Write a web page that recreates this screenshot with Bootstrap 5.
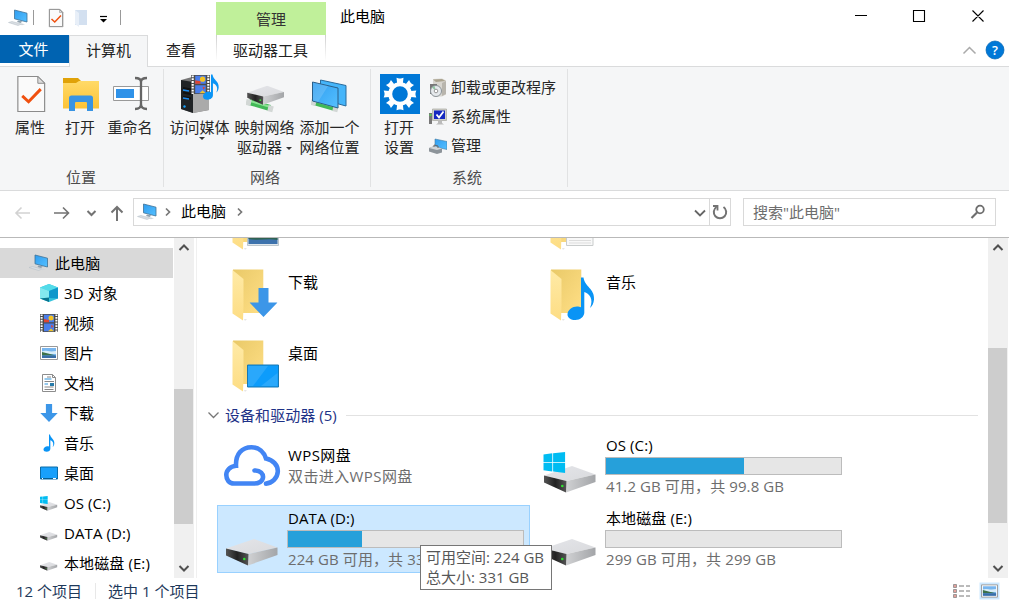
<!DOCTYPE html>
<html lang="zh-CN">
<head>
<meta charset="utf-8">
<title>此电脑</title>
<link href="https://cdn.jsdelivr.net/npm/bootstrap@5.3.0/dist/css/bootstrap.min.css" rel="stylesheet">
<style>
body{font-family:"Open Sans","Noto Sans CJK SC",sans-serif;font-size:15px;line-height:20px;color:#000;background:#fff;height:604px;width:1009px;overflow:hidden}
svg{display:block;flex:none}
.titlebar{height:35px}
.quick{width:216px;padding-left:8px}
.ctx-tab{width:110px;height:33px;margin-top:2px;background:#c0f09a;color:#333}
.win-title{padding:6px 0 0 14px}
.tabrow{height:32px;border-bottom:1px solid #dadbdc;color:#222}
.tabrow>div{height:30px;padding-bottom:1px}
.file-tab{width:69px;height:28px!important;background:#0063b1;color:#fff;padding-right:2px}
.active-tab{width:79px;height:32px!important;background:#f5f6f7;border:1px solid #dadbdc;border-bottom:0;padding-bottom:3px!important}
.view-tab{width:68px;padding-right:2px}
.tool-tab{width:110px;border-style:solid;border-width:0 1px;border-image:linear-gradient(#ccc,#fff 85%) 1;padding-right:1px}
.ribbon{height:123px;background:#f5f6f7;color:#262626}
.rgroup{border-right:1px solid #e1e2e3;margin:2px 0 3px;height:118px}
.g1{width:164px}.g2{width:207px}.g3{width:197px}
.rbody{height:98px;padding-top:5px}
.cap{line-height:20px;color:#4c4c4c;padding-right:4px}
.g1 .cap{padding-right:1px}
.rbtn{width:50px;line-height:19.5px;text-align:center;white-space:nowrap}
.rbtn.wide{width:65px}
.rbtn svg{margin:0 auto 4px}
.caret{display:inline-block;border:3.5px solid transparent;border-top-color:#333;border-bottom:0;vertical-align:middle}
.srow{height:29px;gap:4px}
.addr{height:48px;border-top:1px solid #dadbdc;border-bottom:1px solid #b9b9b9}
.arrows{width:133px;height:28px}
.abox{width:598px;height:28px;border:1px solid #d9d9d9}
.sbox{width:253px;height:28px;border:1px solid #d9d9d9;margin-left:12px;padding:0 9px;color:#6d6d6d}
.refresh{width:21px;height:26px;border-left:1px solid #d9d9d9}
.body-area{height:340px}
.side{width:173px;padding-top:10px;overflow:hidden}
.side .item{height:30px;padding-left:40px;gap:6px;white-space:nowrap;letter-spacing:.1px}
.side .item svg{width:18px;height:18px}
.side .item.sel{background:#d9d9d9;padding-left:28px}
.side .item.sel svg{width:21px}
.sbar{width:20px;background:#f0f0f0;margin-left:1px}
.thumb{background:#cdcdcd;margin-right:1px}
.pane{width:791px;padding-left:20px;overflow:hidden}
.pane-edge{border-left:1px solid #f0f0f0;margin-left:2px}
.files{display:grid;grid-template-columns:318px 318px;grid-auto-rows:71px;margin-top:-46px}
.entry{padding-left:6px;gap:5px}
.entry .nm{padding-top:9px}
.ghead{height:22px;color:#1e3287;margin-left:-10px;white-space:nowrap;margin-top:-1px;letter-spacing:.05px}
.rule{height:1px;background:#e2e2e2;flex:1;margin:1px 10px 0 9px}
.drives{display:grid;grid-template-columns:313px 313px;column-gap:5px;row-gap:5px;grid-auto-rows:68px;padding-top:6px}
.drive{border:1px solid transparent;padding-left:5px;gap:4px;white-space:nowrap;letter-spacing:.1px}
.drive.sel{background:#cce8ff;border-color:#99d1ff}
.drive .txt{padding-top:2px;width:237px;text-indent:1px}
.meter{height:18px;border:1px solid #bcbcbc;background:#e6e6e6;margin:2px 0 1px}
.meter>div{height:100%;background:#26a0da}
.sub{color:#6d6d6d}
.statusbar{height:25px;color:#1e395b;padding:1px 8px 0 16px}
.sep{width:1px;height:16px;background:#e8e8e8}
.tip{position:absolute;left:420px;top:545px;width:132px;height:45px;border:1px solid #767676;background:#fff;color:#575757;padding:1px 0 0 5px;white-space:nowrap}
</style>
</head>
<body class="d-flex flex-column">
<svg width="0" height="0" class="position-absolute">
<defs>
<linearGradient id="scr" x1="0" y1="0" x2="1" y2="1"><stop offset="0" stop-color="#2f9df0"/><stop offset="1" stop-color="#55c0ff"/></linearGradient>
<linearGradient id="fb" x1="0" y1="0" x2="1" y2="1"><stop offset="0" stop-color="#e9c968"/><stop offset="1" stop-color="#ffdf86"/></linearGradient>
<linearGradient id="ff" x1="0" y1="0" x2="0" y2="1"><stop offset="0" stop-color="#ffeaa6"/><stop offset="1" stop-color="#fddd84"/></linearGradient>
<linearGradient id="dt" x1="0" y1="0" x2="1" y2="1"><stop offset="0" stop-color="#e4e5e9"/><stop offset="1" stop-color="#d9dadd"/></linearGradient>
<linearGradient id="ds" x1="0" y1="0" x2="1" y2="0"><stop offset="0" stop-color="#d0d1d3"/><stop offset="1" stop-color="#a3a5a8"/></linearGradient>
<linearGradient id="dk" x1="0" y1="0" x2="1" y2="0"><stop offset="0" stop-color="#555"/><stop offset=".5" stop-color="#222"/><stop offset="1" stop-color="#555"/></linearGradient>
<linearGradient id="fo" x1="0" y1="0" x2="0" y2="1"><stop offset="0" stop-color="#ffda68"/><stop offset="1" stop-color="#fdc336"/></linearGradient>
<symbol id="pc" viewBox="0 0 20 18"><path d="M6.500 1 19 4.200V13L6.500 9.800z" fill="url(#scr)" stroke="#3f7195" stroke-width=".8"/><path d="M10 11.500l4.500 1-2 1.500-3.500-1z" fill="#8fa0ad"/><path d="M.5 13.500 4 12.500l9.500 2.500-3.500 1.500z" fill="#d9dee3" stroke="#b3bcc4" stroke-width=".5"/><path d="M11 15l3-.5 3 .8-3 1z" fill="#cfd5da"/></symbol>
<symbol id="check" viewBox="0 0 30 38"><path d="M1.500 1H22l7 7v29H1.500z" fill="#fafafa" stroke="#8b8b8b" stroke-width="1.200"/><path d="M22 1v7h7z" fill="#ddd" stroke="#8b8b8b"/><path d="M6 21l6.500 6L25 14" fill="none" stroke="#f0500f" stroke-width="3"/></symbol>
<symbol id="bigfolder" viewBox="0 0 60 71"><path d="M10 6.500h30.300V50H10z" fill="url(#fb)"/><path d="M9.500 7 20.500 16v27l-.5 14.500L9.500 50.500z" fill="url(#ff)"/><path d="M21 56h3l-2 2z" fill="#e5e5e5"/></symbol>
<symbol id="disk" viewBox="0 0 54 28"><path d="M0 10 28 .5 51.500 9 22.500 15.500z" fill="url(#dt)"/><path d="M22.500 15.500 51.500 9v7.500L22 27z" fill="url(#ds)"/><path d="M0 10 22.500 15.500 22 27 0 17z" fill="url(#dk)"/><circle cx="18.300" cy="20.500" r="1.300" fill="#2fe02f"/></symbol>
<symbol id="win" viewBox="0 0 22 21"><path d="M0 2.500 9 1.300V10H0zM9.800 1.200 22 0v10H9.800zM0 10.800h9v8.700L0 18.200zM9.800 10.800H22V21l-12.200-1.400z" fill="#00bcf2"/></symbol>
<symbol id="note" viewBox="0 0 28 44"><path d="M14 1h2.500c1 9 11.500 11.500 10.500 22-.3 4-2 7-4 8.500C27 22 22 17 17.300 15.500V36c0 4-4 7.500-9 7.500C4 43.500.5 41.500.5 38c0-4.500 5-8 9.500-8 1.500 0 3 .2 4 .8z" fill="#0a94f5"/></symbol>
<symbol id="down" viewBox="0 0 28 29"><path d="M9 0h10v14.500h9L14 29 0 14.500h9z" fill="#3c96e8"/></symbol>
<symbol id="film" viewBox="0 0 18 18"><path d="M0 0h18v18H0z" fill="#4b4b4b"/><path d="M1.600 .4v18M16.400 .4v18" stroke="#fff" stroke-width="2" stroke-dasharray="1.700 1"/><path d="M4 .7h10v7.600H4zM4 9.600h10v7.700H4z" fill="#4b7eea"/><circle cx="11" cy="4" r="2.500" fill="#f4c221"/><path d="M4 5l5 1v2.300H4zM11 11l2.500 1-2 2z" fill="#df4530"/><path d="M8 17.300l3-2.800 3 2.800z" fill="#f0c32b"/></symbol>
<symbol id="pic" viewBox="0 0 18 18"><path d="M.5 2.500h17v13H.5z" fill="#fff" stroke="#999"/><path d="M2 4h14v10H2z" fill="#78b6ef"/><path d="M2 7.500c4-2 6 1 14-.5v3H2z" fill="#d7ecf8"/><path d="M2 8l6 1.500 8 2H2z" fill="#3c7149"/><path d="M2 11.500h14V14H2z" fill="#396ea8"/></symbol>
<symbol id="net" viewBox="0 0 28 14"><path d="M3 3 24 9" stroke="#42b957" stroke-width="6"/><path d="M4 2 23 7.500" stroke="#8be292" stroke-width="2"/><path d="M0 3 5 4.200M22 9l5 1.300" stroke="#d2d7d5" stroke-width="6"/></symbol>
<symbol id="chev" viewBox="0 0 12 12"><path d="M1.500 8 6 3.500 10.500 8" fill="none" stroke="#505050" stroke-width="2"/></symbol>
</defs>
</svg>

<header class="titlebar d-flex">
  <div class="quick d-flex align-items-center">
    <svg width="20" height="18"><use href="#pc"/></svg>
    <svg width="160" height="24" viewBox="28 5 160 24"><path d="M33.500 9v15M120.500 9v15" stroke="#999"/><use href="#check" x="48" y="7.500" width="16" height="19"/><path d="M49.500 8.500h10l3 3v14h-13z" fill="none" stroke="#999"/><path d="M75 9h12v15H75z" fill="#d3e0f0"/><path d="M75 9l4 3v14l-4-3z" fill="#e8eff8"/><path d="M100 15.500h7" stroke="#000" stroke-width="1.200"/><path d="M100 18h7l-3.500 3.500z"/></svg>
  </div>
  <div class="ctx-tab d-flex align-items-center justify-content-center">管理</div>
  <div class="win-title">此电脑</div>
  <svg class="ms-auto" width="160" height="35" viewBox="849 0 160 35"><path d="M855 15.500h12M913.500 10.500h11v11h-11zM972.500 10.500l11 11M983.500 10.500l-11 11" fill="none" stroke="#000" stroke-width="1.100"/></svg>
</header>
<nav class="tabrow d-flex">
  <div class="file-tab d-flex align-items-center justify-content-center">文件</div>
  <div class="active-tab d-flex align-items-center justify-content-center">计算机</div>
  <div class="view-tab d-flex align-items-center justify-content-center">查看</div>
  <div class="tool-tab d-flex align-items-center justify-content-center">驱动器工具</div>
  <div class="ms-auto d-flex align-items-center me-1 gap-2">
    <svg width="16" height="12" viewBox="0 0 16 12"><path d="M2.500 9.500 8.500 3.500l6 6" fill="none" stroke="#aaa" stroke-width="1.500"/></svg>
    <svg width="20" height="20" viewBox="0 0 20 20"><circle cx="10" cy="10" r="9" fill="#0078d7" stroke="#0063b1" stroke-width=".7"/><text x="10" y="14.500" text-anchor="middle" font-size="13" font-weight="600" fill="#fff">?</text></svg>
  </div>
</nav>

<section class="ribbon d-flex">
  <div class="rgroup g1">
    <div class="rbody d-flex" style="padding-left:5px">
      <div class="rbtn"><svg width="40" height="40" viewBox="0 0 40 40"><use href="#check" x="6" y="1.500" width="30" height="37"/></svg>属性</div>
      <div class="rbtn"><svg width="40" height="40" viewBox="0 0 40 40"><path d="M3 4h15l3 3-3 4H3z" fill="#e0a208"/><path d="M3 9h13l3-2h20v27.500H3z" fill="url(#fo)"/><path d="M9 37V24q0-2.500 2.500-2.500h19q2.500 0 2.500 2.500v13h-6v-8q0-1-1-1H16q-1 0-1 1v8z" fill="#3994e3"/></svg>打开</div>
      <div class="rbtn"><svg width="40" height="40" viewBox="0 0 40 40"><path d="M3.500 12.500h35v14h-35z" fill="#fff" stroke="#999"/><path d="M6 15h18v9H6z" fill="#2f92e8"/><path d="M25 4c4 0 6 1 6 4v22c0 3-2 5-6 5M37 4c-4 0-6 1-6 4v22c0 3 2 5 6 5" fill="none" stroke="#666" stroke-width="2.300"/></svg>重命名</div>
    </div>
    <div class="cap text-center">位置</div>
  </div>
  <div class="rgroup g2">
    <div class="rbody d-flex" style="padding-left:3px">
      <div class="rbtn wide position-relative"><svg width="40" height="40" viewBox="0 0 40 40"><path d="M1 6 12 3l17 3v30l-16 3L1 35z" fill="#777"/><path d="M1 6l12 2v31L1 35z" fill="#202326"/><path d="M13 8l16-2v30l-16 3z" fill="#aaa"/><path d="M3 14l8 1.500M3 18.500l8 1.500M3 23l8 1.500" stroke="#111" stroke-width="2"/><path d="M3 16l6 1M3 24l6 1" stroke="#1c8cf0" stroke-width="1.300"/><circle cx="4.500" cy="32.500" r="1.200" fill="#16a2ff"/><use href="#film" x="11" y="1" width="19" height="19"/><use href="#note" x="22" y="0" width="18" height="26"/></svg>访问媒体<span class="caret position-absolute" style="left:32px;top:63px"></span></div>
      <div class="rbtn wide"><svg width="40" height="40" viewBox="0 0 40 40"><use href="#net" x="1" y="25" width="28" height="14"/><use href="#disk" x="2" y="11.500" width="39" height="20"/></svg>映射网络<br>驱动器 <span class="caret"></span></div>
      <div class="rbtn wide"><svg width="40" height="40" viewBox="0 0 40 40"><use href="#net" x="1" y="25" width="28" height="14"/><path d="M10.500 6 36 11.500V32L10.500 25z" fill="#45b5fa" stroke="#2a6b9c"/><path d="M2.500 8 28 14v20L2.500 27z" fill="url(#scr)" stroke="#2a5f89"/><path d="M3 8.500 18 12 8 28 3 26.500z" fill="#fff" opacity=".15"/></svg>添加一个<br>网络位置</div>
    </div>
    <div class="cap text-center">网络</div>
  </div>
  <div class="rgroup g3">
    <div class="rbody d-flex">
      <div class="rbtn" style="width:50px;margin-left:3px"><svg width="40" height="40" viewBox="-20 -20 40 40" style="margin-left:6px"><path d="M-20-20h40v40h-40z" fill="#0078d7"/><circle r="9.800" fill="none" stroke="#fff" stroke-width="4"/><g fill="#fff"><path id="cog" d="M-2.900-11-3.500-16.300-1-15.500H1L3.500-16.300 2.900-11z"/><use href="#cog" transform="rotate(45)"/><use href="#cog" transform="rotate(90)"/><use href="#cog" transform="rotate(135)"/><use href="#cog" transform="rotate(180)"/><use href="#cog" transform="rotate(225)"/><use href="#cog" transform="rotate(270)"/><use href="#cog" transform="rotate(315)"/></g></svg>打开<br>设置</div>
      <div class="lh-sm" style="padding-left:5px;margin-top:-1px">
        <div class="srow d-flex align-items-center"><svg width="18" height="20" viewBox="0 0 18 20"><path d="M4 1l9-.5 4 2v14l-4 2H4z" fill="#d7d5cf"/><path d="M4 1.500 13 1l3.500 2L7 4z" fill="#aaa38f"/><path d="M13 5l4-2v13l-4 2z" fill="#b8b5ad"/><path d="M1 6h7v10H1z" fill="#777"/><circle cx="7" cy="13" r="5.500" fill="#e5e9ec" stroke="#8b9297"/><path d="M7 13 3 9.500 5.500 8z" fill="#8dc6a0"/><circle cx="7" cy="13" r="1.800" fill="#fff" stroke="#999"/></svg>卸载或更改程序</div>
        <div class="srow d-flex align-items-center"><svg width="18" height="20" viewBox="0 0 18 20"><path d="M0 6h3v11H0z" fill="#777"/><path d="M.5 8h2" stroke="#4be34b" stroke-width="1.500"/><path d="M3.500 2h14v11.500h-14z" fill="#d0d0ca" stroke="#a6a69f" stroke-width=".7"/><path d="M5 3.500h11V12H5z" fill="#1528c0"/><path d="M7.500 7.500l2.500 3 4.500-6" fill="none" stroke="#fff" stroke-width="1.800"/><path d="M9 13.500h4V16l2 1.500H7L9 16z" fill="#bbb"/></svg>系统属性</div>
        <div class="srow d-flex align-items-center"><svg width="18" height="20" viewBox="0 0 18 20"><path d="M6 3l12 2.500v8L6 11z" fill="url(#scr)" stroke="#447da3" stroke-width=".6"/><path d="M0 12l5-2 8 2.500v4L8 18 0 15.500z" fill="#8d949a"/><path d="M0 12l5-2 8 2.500L8 14z" fill="#d1d5d8"/><path d="M5 11V9l4 1v2" fill="none" stroke="#666"/></svg>管理</div>
      </div>
    </div>
    <div class="cap text-center">系统</div>
  </div>
</section>

<section class="addr d-flex align-items-start" style="padding-top:7px">
  <svg class="arrows" viewBox="0 198 133 28"><g fill="none" stroke-width="1.600"><path d="M30 213H15.500M21.500 207.500 16 213l5.500 5.500" stroke="#d2d2d2"/><path d="M54 213H69M63 207.500l5.500 5.500-5.500 5.500" stroke="#737373"/><path d="M87.500 211l4 4 4-4" stroke="#737373" stroke-width="2"/><path d="M117 221V206.500M111.500 212.500l5.500-5.500 5.500 5.500" stroke="#737373" stroke-width="2"/></g></svg>
  <div class="abox d-flex align-items-center">
    <svg width="47" height="26" viewBox="134 199 47 26"><use href="#pc" x="137" y="203" width="20" height="18"/><path d="M166 208.500l3.500 3.500-3.500 3.500" fill="none" stroke="#777" stroke-width="1.700"/></svg><span class="pb-1" style="margin-top:2px">此电脑</span>
    <svg width="24" height="26" viewBox="226 199 24 26"><path d="M238 208.500l3.500 3.500-3.500 3.500" fill="none" stroke="#777" stroke-width="1.700"/></svg>
    <svg class="ms-auto" width="12" height="12" viewBox="0 0 12 12" style="margin-right:3px"><path d="M1 4.500 6 9.500l5-5" fill="none" stroke="#666" stroke-width="1.800"/></svg>
    <div class="refresh d-flex align-items-center justify-content-center"><svg width="18" height="18" viewBox="0 0 18 18"><path d="M12.500 4A6.200 6.200 0 1 1 5.500 4" fill="none" stroke="#737373" stroke-width="2"/><path d="M2 3h4.500v4.500" fill="none" stroke="#737373" stroke-width="1.800"/></svg></div>
  </div>
  <div class="sbox d-flex align-items-center">搜索"此电脑"<svg class="ms-auto" width="16" height="16" viewBox="0 0 16 16"><circle cx="10" cy="5.500" r="3.800" fill="none" stroke="#6d6d6d" stroke-width="1.800"/><path d="M7 8.500l-5.500 5.500" stroke="#6d6d6d" stroke-width="2.200"/></svg></div>
</section>

<main class="body-area d-flex">
  <div class="side">
    <div class="item sel d-flex align-items-center"><svg><use href="#pc"/></svg>此电脑</div>
    <div class="item d-flex align-items-center"><svg viewBox="0 0 18 18"><path d="M9 0l9 3.500v11L9 18 0 14.500v-11z" fill="#35c3dc"/><path d="M9 0l9 3.500L9 7 0 3.500z" fill="#53dbe9"/><path d="M0 3.500 9 7v7l-9 .5z" fill="#83e8ef"/><path d="M18 3.500 9 7v7l9 .5z" fill="#0f98cb"/><path d="M0 14.500l9-1V18z" fill="#08748f"/></svg>3D 对象</div>
    <div class="item d-flex align-items-center"><svg><use href="#film"/></svg>视频</div>
    <div class="item d-flex align-items-center"><svg><use href="#pic"/></svg>图片</div>
    <div class="item d-flex align-items-center"><svg viewBox="0 0 18 18"><path d="M2.500.5h10l3 3v14h-13z" fill="#fff" stroke="#8d8d8d"/><path d="M12.500.5v3h3" fill="none" stroke="#888"/><path d="M7 3h4M4.500 7.500H14M4.500 13h9M4.500 15.500h9" stroke="#888"/><path d="M4.500 5h7M4.500 10h3.500" stroke="#2c93db" stroke-width="1.200"/><path d="M10 9h4v3h-4z" fill="#287cab"/></svg>文档</div>
    <div class="item d-flex align-items-center"><svg><use href="#down"/></svg>下载</div>
    <div class="item d-flex align-items-center"><svg><use href="#note"/></svg>音乐</div>
    <div class="item d-flex align-items-center"><svg viewBox="0 0 18 18"><path d="M.5 3h17v12H.5z" fill="#18a0fb" stroke="#0a6ca8"/><path d="M1 14.500h16" stroke="#075e91"/><path d="M2 14.500h1M13 14.500h3" stroke="#fff"/></svg>桌面</div>
    <div class="item d-flex align-items-center"><svg viewBox="0 0 18 18"><use href="#disk" y="7.500" width="18" height="10"/><use href="#win" x="-1" y="2" width="9" height="8"/></svg>OS (C:)</div>
    <div class="item d-flex align-items-center"><svg viewBox="0 0 18 18"><use href="#disk" y="7.500" width="18" height="10"/></svg>DATA (D:)</div>
    <div class="item d-flex align-items-center"><svg viewBox="0 0 18 18"><use href="#disk" y="7.500" width="18" height="10"/></svg>本地磁盘 (E:)</div>
  </div>
  <div class="sbar d-flex flex-column align-items-stretch">
    <svg class="mx-auto" width="12" height="12" style="margin:4px 0 135px"><use href="#chev"/></svg>
    <div class="thumb" style="height:135px"></div>
    <svg class="mx-auto mt-auto mb-1" width="12" height="12" style="transform:scaleY(-1)"><use href="#chev"/></svg>
  </div>
  <div class="pane-edge"></div>
  <div class="pane flex-grow-1">
    <div class="files">
      <div class="entry d-flex"><svg width="60" height="71"><use href="#bigfolder"/><path d="M24.500 30h31v23.500h-31z" fill="#dfe6eb" stroke="#aebac2" stroke-width=".8"/><path d="M25.500 42h29v10h-29z" fill="#3d72ac"/><path d="M25.500 42h29v6c-9-2-19 1-29-1z" fill="#2f6353"/></svg></div>
      <div class="entry d-flex"><svg width="60" height="71"><use href="#bigfolder"/><path d="M25.500 30h26.500v23.500H25.500z" fill="#f8f8f8" stroke="#c9cccc"/><path d="M28 48.500h22M28 51h22" stroke="#ddd"/></svg></div>
      <div class="entry d-flex"><svg width="60" height="71"><use href="#bigfolder"/><use href="#down" x="26.500" y="25" width="28" height="29"/></svg><div class="nm">下载</div></div>
      <div class="entry d-flex"><svg width="60" height="71"><use href="#bigfolder"/><use href="#note" x="26" y="13.500" width="28" height="44"/></svg><div class="nm">音乐</div></div>
      <div class="entry d-flex"><svg width="60" height="71"><use href="#bigfolder"/><path d="M24.500 31h31v22h-31z" fill="#0d9cfb" stroke="#1878b3"/><path d="M25 32h20L30 52h-5zM38 52 54.500 39v13z" fill="#fff" opacity=".12"/></svg><div class="nm">桌面</div></div>
    </div>
    <div class="ghead d-flex align-items-center"><svg width="18" height="12" viewBox="0 0 18 12"><path d="M1.500 3.500l5 5 5-5" fill="none" stroke="#777" stroke-width="1.300"/></svg>设备和驱动器 (5)<div class="rule"></div></div>
    <div class="drives">
      <div class="drive d-flex"><svg width="60" height="66" viewBox="0 1 60 66"><path d="M31.500 38.500C37 38 41 42 39.800 46.500 38.700 50 35 51.500 31 51.500H11C6 51.500 3.300 47.500 3.300 43c0-4.700 3.700-8.700 9.700-9.200C12.500 22 19 15.200 28.500 15.200c7.500 0 12.500 4.800 14.500 11.300C50 28 55 33 54.800 39.500 54.500 46 49 51.500 43 51.600" fill="none" stroke="#4285f4" stroke-width="4.600" stroke-linecap="round"/></svg><div class="txt" style="padding-top:12px;letter-spacing:.4px">WPS网盘<div class="sub" style="margin-top:1px">双击进入WPS网盘</div></div></div>
      <div class="drive d-flex"><svg width="60" height="66" viewBox="0 1 60 66"><use href="#disk" x="3" y="33.500" width="54" height="28"/><use href="#win" x="2.300" y="20" width="22" height="21"/></svg><div class="txt">OS (C:)<div class="meter"><div style="width:58.800%"></div></div><div class="sub">41.2 GB 可用，共 99.8 GB</div></div></div>
      <div class="drive sel d-flex"><svg width="60" height="66" viewBox="0 1 60 66"><use href="#disk" x="3" y="33.500" width="54" height="28"/></svg><div class="txt">DATA (D:)<div class="meter"><div style="width:31.600%"></div></div><div class="sub">224 GB 可用，共 331 GB</div></div></div>
      <div class="drive d-flex"><svg width="60" height="66" viewBox="0 1 60 66"><use href="#disk" x="3" y="33.500" width="54" height="28"/></svg><div class="txt">本地磁盘 (E:)<div class="meter"></div><div class="sub">299 GB 可用，共 299 GB</div></div></div>
    </div>
  </div>
  <div class="sbar d-flex flex-column" style="margin:0 1px 0 0">
    <svg class="mx-auto" width="12" height="12" style="margin:4px 0 94px"><use href="#chev"/></svg>
    <div class="thumb" style="height:175px"></div>
    <svg class="mx-auto mt-auto mb-1" width="12" height="12" style="transform:scaleY(-1)"><use href="#chev"/></svg>
  </div>
</main>
<footer class="statusbar d-flex align-items-center">
  <span>12 个项目</span><span class="sep" style="margin:0 12px 0 13px"></span><span>选中 1 个项目</span>
  <svg class="ms-auto" width="50" height="20" viewBox="951 582 50 20"><path d="M953.500 585.500h3v3h-3zM953.500 590.500h3v3h-3zM953.500 595.500h3v3h-3z" fill="#e3a09a" stroke="#888" stroke-width=".8"/><path d="M959 587h5M966 587h4M959 592h5M966 592h4M959 597h5M966 597h4" stroke="#777"/><path d="M979.500 583.500h20v17h-20z" fill="#cce8ff"/><use href="#pic" x="981" y="583.500" width="17" height="17"/></svg>
</footer>
<div class="tip">可用空间: 224 GB<br>总大小: 331 GB</div>
<script src="https://cdn.jsdelivr.net/npm/bootstrap@5.3.0/dist/js/bootstrap.bundle.min.js"></script>
</body>
</html>
